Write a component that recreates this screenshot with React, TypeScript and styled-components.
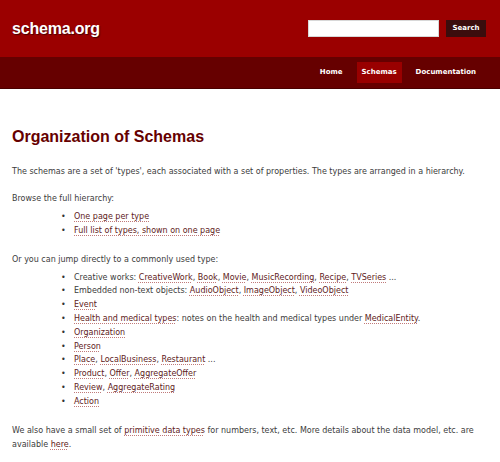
import React from "react";
import styled, { createGlobalStyle } from "styled-components";

const GlobalStyle = createGlobalStyle`
  body {
    margin: 0;
    background: #ffffff;
    font-family: "DejaVu Sans", "Liberation Sans", sans-serif;
  }
`;

const TopBar = styled.header`
  height: 57px;
  background: #9b0000;
  display: flex;
  align-items: center;
  justify-content: space-between;
  padding: 0 14px 0 12px;
  box-sizing: border-box;
`;

const Logo = styled.a`
  font-family: "Liberation Sans", Arial, sans-serif;
  font-weight: bold;
  font-size: 16px;
  letter-spacing: -0.2px;
  color: #ffffff;
  text-decoration: none;
  text-shadow: 1px 1px 1px rgba(40, 0, 0, 0.7);
  margin-top: 1px;
`;

const SearchForm = styled.form`
  display: flex;
  align-items: center;
  gap: 7px;
  margin: 0 0 1px;
`;

const SearchInput = styled.input`
  width: 131px;
  height: 17px;
  box-sizing: border-box;
  border: 1px solid #d8d8d8;
  background: #ffffff;
  padding: 0 3px;
  font-size: 8px;
`;

const SearchButton = styled.button`
  width: 40px;
  height: 17px;
  border: 0;
  padding: 0;
  background: #3a0d0d;
  color: #ffffff;
  font-family: "DejaVu Sans", sans-serif;
  font-weight: bold;
  font-size: 7px;
`;

const NavBar = styled.nav`
  height: 32px;
  background: #660000;
  border-bottom: 1px solid #4a0000;
  box-sizing: border-box;
  display: flex;
  align-items: center;
  justify-content: flex-end;
  gap: 9px;
  padding: 0 19px 1px 0;
`;

const NavItem = styled.a<{ $active?: boolean }>`
  display: flex;
  align-items: center;
  height: 21px;
  padding: 0 5px;
  font-weight: bold;
  font-size: 7px;
  color: #ffffff;
  text-decoration: none;
  background: ${(p) => (p.$active ? "#990000" : "transparent")};
`;

const Main = styled.main`
  padding: 0 14px 0 12px;
  color: #3c3c3c;
  font-size: 8px;
  line-height: 14px;
`;

const Title = styled.h1`
  font-family: "Liberation Sans", Arial, sans-serif;
  font-weight: bold;
  font-size: 16px;
  line-height: 20px;
  color: #660000;
  margin: 38px 0 18px;
`;

const P = styled.p<{ $lead?: boolean }>`
  margin: 0 0 ${(p) => (p.$lead ? "4px" : "13px")};
`;

const List = styled.ul`
  list-style: none;
  margin: 0 0 15px;
  padding: 0 0 0 62px;
  line-height: 13.8px;
`;

const Item = styled.li`
  &::before {
    content: "•";
    display: inline-block;
    width: 13px;
    margin-left: -13px;
    color: #333333;
  }
`;

const Link = styled.a`
  color: #5e1a1a;
  text-decoration: underline dotted #c07a7a;
  text-underline-offset: 2px;
`;

const L = ({ children }: { children: React.ReactNode }) => (
  <Link href="#">{children}</Link>
);

export default function App() {
  return (
    <>
      <GlobalStyle />
      <TopBar>
        <Logo href="#">schema.org</Logo>
        <SearchForm onSubmit={(e) => e.preventDefault()}>
          <SearchInput type="text" />
          <SearchButton type="submit">Search</SearchButton>
        </SearchForm>
      </TopBar>
      <NavBar>
        <NavItem href="#">Home</NavItem>
        <NavItem href="#" $active>
          Schemas
        </NavItem>
        <NavItem href="#">Documentation</NavItem>
      </NavBar>
      <Main>
        <Title>Organization of Schemas</Title>
        <P>
          The schemas are a set of 'types', each associated with a set of
          properties. The types are arranged in a hierarchy.
        </P>
        <P $lead>Browse the full hierarchy:</P>
        <List>
          <Item>
            <L>One page per type</L>
          </Item>
          <Item>
            <L>Full list of types, shown on one page</L>
          </Item>
        </List>
        <P $lead>Or you can jump directly to a commonly used type:</P>
        <List>
          <Item>
            Creative works: <L>CreativeWork</L>, <L>Book</L>, <L>Movie</L>,{" "}
            <L>MusicRecording</L>, <L>Recipe</L>, <L>TVSeries</L> ...
          </Item>
          <Item>
            Embedded non-text objects: <L>AudioObject</L>,{" "}
            <L>ImageObject</L>, <L>VideoObject</L>
          </Item>
          <Item>
            <L>Event</L>
          </Item>
          <Item>
            <L>Health and medical types</L>: notes on the health and medical
            types under <L>MedicalEntity</L>.
          </Item>
          <Item>
            <L>Organization</L>
          </Item>
          <Item>
            <L>Person</L>
          </Item>
          <Item>
            <L>Place</L>, <L>LocalBusiness</L>, <L>Restaurant</L> ...
          </Item>
          <Item>
            <L>Product</L>, <L>Offer</L>, <L>AggregateOffer</L>
          </Item>
          <Item>
            <L>Review</L>, <L>AggregateRating</L>
          </Item>
          <Item>
            <L>Action</L>
          </Item>
        </List>
        <P>
          We also have a small set of <L>primitive data types</L>
          {" for numbers, text, etc. More details about the data model, etc. are "}
          {"available "}
          <L>here</L>.
        </P>
      </Main>
    </>
  );
}
